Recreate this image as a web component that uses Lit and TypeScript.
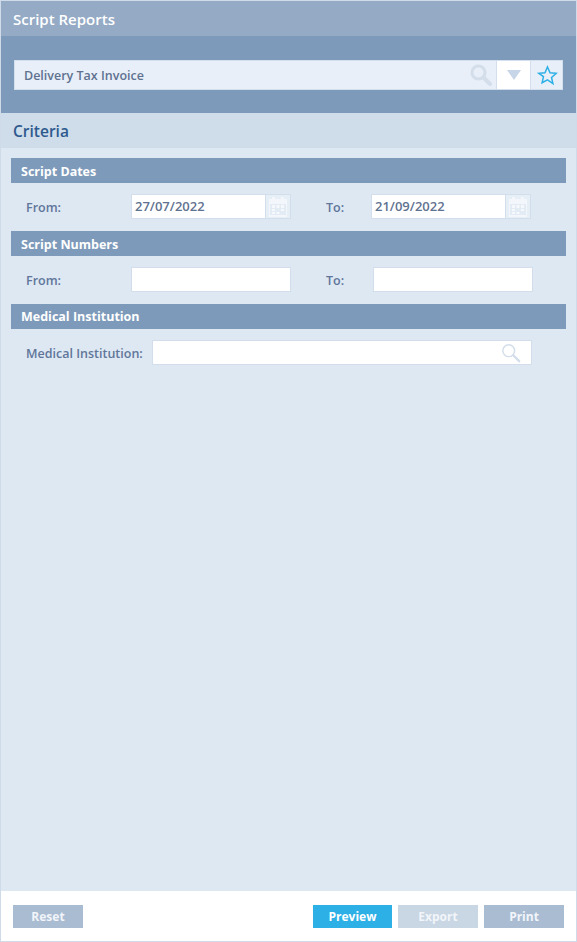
import { LitElement, html, css, svg } from "lit";
import { customElement } from "lit/decorators.js";

const calendar = html`<svg class="cal" viewBox="0 0 20 22" width="20" height="22" aria-hidden="true">
  <path fill="#f3f6fb" d="M1 3h3V1h3v2h6V1h3v2h3v18H1z"/>
  <path fill="#e3ebf4" d="M2 8h16v11H2z"/>
  <path fill="#f6f9fc" d="M4 9h3v3H4zM8.500 9h3v3h-3zM13 9h3v3h-3zM4 13h3v2H4zM13 13h3v2h-3zM4 16h3v2H4zM8.500 16h3v2h-3z"/>
</svg>`;

const searchIcon = (cls: string, stroke: string, w: number) => svg`<svg class=${cls} viewBox="0 0 22 22" aria-hidden="true">
  <circle cx="8.5" cy="8.5" r="6.5" fill="none" stroke=${stroke} stroke-width=${w}/>
  <path d="M13.5 13.5 20 20" fill="none" stroke=${stroke} stroke-width=${w + 1} stroke-linecap="round"/>
</svg>`;

@customElement("app-root")
export class AppRoot extends LitElement {
  static styles = css`
    :host {
      display: block;
      width: 577px;
      height: 942px;
      font-family: "Open Sans", "Noto Sans", sans-serif;
    }
    * { box-sizing: border-box; }
    .page {
      width: 577px;
      height: 942px;
      display: flex;
      flex-direction: column;
      border: 1px solid #cfdbe8;
      background: #dee8f3;
    }
    .title {
      height: 35px;
      flex: none;
      background: #94aac5;
      color: #fff;
      font-size: 15px;
      font-weight: 600;
      line-height: 37px;
      padding-left: 12px;
    }
    .picker {
      height: 77px;
      flex: none;
      background: #7d9aba;
      padding: 24px 13px 0 13px;
    }
    .combo {
      display: flex;
      height: 30px;
      background: #e8eff8;
      border: 1px solid #d3dfec;
    }
    .combo-text {
      flex: 1;
      display: flex;
      align-items: center;
      justify-content: space-between;
      padding: 0 4px 0 9px;
      font-size: 12.5px;
      font-weight: 600;
      color: #5f7290;
    }
    .lens-big { width: 22px; height: 22px; }
    .arrow {
      width: 35px;
      flex: none;
      background: #fff;
      border-left: 1px solid #d3dfec;
      border-right: 1px solid #d3dfec;
      display: flex;
      align-items: center;
      justify-content: center;
    }
    .tri {
      width: 0;
      height: 0;
      border-left: 7px solid transparent;
      border-right: 7px solid transparent;
      border-top: 10px solid #c6d5e7;
    }
    .fav {
      width: 31px;
      flex: none;
      display: flex;
      align-items: center;
      justify-content: center;
      padding-left: 2px;
    }
    .star { width: 21px; height: 21px; }
    .criteria {
      height: 35px;
      flex: none;
      background: #cfdcea;
      color: #2d5a8e;
      font-size: 15.5px;
      font-weight: 600;
      line-height: 37px;
      padding-left: 12px;
    }
    .body {
      flex: 1;
      padding: 10px 10px 0 10px;
      display: flex;
      flex-direction: column;
    }
    .head {
      height: 25px;
      background: #7d9aba;
      color: #fff;
      font-size: 12.5px;
      font-weight: 700;
      line-height: 27px;
      padding-left: 10px;
    }
    .head.tight { line-height: 25px; }
    .row {
      height: 48px;
      display: flex;
      align-items: flex-start;
      padding-top: 11px;
      font-size: 12.5px;
      font-weight: 600;
      color: #60769a;
    }
    .row.last { height: 47px; }
    .label {
      height: 25px;
      line-height: 27px;
    }
    .l-from { width: 120px; padding-left: 15px; flex: none; }
    .l-to { width: 45px; flex: none; }
    .l-to.n { width: 47px; }
    .gap { width: 35px; flex: none; }
    .l-med { width: 141px; padding-left: 15px; flex: none; white-space: nowrap; }
    .box {
      height: 25px;
      background: #fff;
      border: 1px solid #d2deec;
      line-height: 23px;
      padding-left: 3px;
      font-size: 13px;
      font-weight: 600;
      color: #5f7290;
      flex: none;
    }
    .date { width: 134px; border-right: none; }
    .calbtn {
      width: 26px;
      height: 25px;
      flex: none;
      background: #e6eef6;
      border: 1px solid #d2deec;
      display: flex;
      align-items: center;
      justify-content: center;
    }
    .num { width: 160px; }
    .med {
      width: 380px;
      display: flex;
      align-items: center;
      justify-content: flex-end;
      padding-right: 10px;
    }
    .lens-small { width: 20px; height: 20px; }
    .foot {
      height: 50px;
      flex: none;
      background: #fff;
      display: flex;
      align-items: flex-start;
      padding: 14px 12px 0 12px;
    }
    .btn {
      height: 23px;
      color: #f2f5f9;
      font-size: 12px;
      font-weight: 700;
      text-align: center;
      line-height: 23px;
      flex: none;
    }
    .reset { width: 70px; background: #a9bcd2; margin-right: auto; }
    .preview { width: 79px; background: #2cb0e6; margin-right: 6px; color: #fff; }
    .export { width: 80px; background: #c9d6e3; margin-right: 6px; }
    .print { width: 80px; background: #a9bcd2; }
  `;

  render() {
    return html`<div class="page">
      <div class="title">Script Reports</div>
      <div class="picker">
        <div class="combo">
          <div class="combo-text">
            <span>Delivery Tax Invoice</span>
            ${searchIcon("lens-big", "#d3deea", 3)}
          </div>
          <div class="arrow"><div class="tri"></div></div>
          <div class="fav">
            <svg class="star" viewBox="0 0 24 24" aria-hidden="true">
              <path d="M12 2.200l2.900 6.600 7.100.7-5.400 4.700 1.600 7.100L12 17l-6.200 3.300 1.600-7.100L2 9.500l7.100-.7z" fill="none" stroke="#2cb0e6" stroke-width="1.700" stroke-linejoin="miter"/>
            </svg>
          </div>
        </div>
      </div>
      <div class="criteria">Criteria</div>
      <div class="body">
        <div class="head">Script Dates</div>
        <div class="row">
          <span class="label l-from">From:</span>
          <div class="box date">27/07/2022</div>
          <div class="calbtn">${calendar}</div>
          <span class="gap"></span>
          <span class="label l-to">To:</span>
          <div class="box date">21/09/2022</div>
          <div class="calbtn">${calendar}</div>
        </div>
        <div class="head">Script Numbers</div>
        <div class="row">
          <span class="label l-from">From:</span>
          <div class="box num"></div>
          <span class="gap"></span>
          <span class="label l-to n">To:</span>
          <div class="box num"></div>
        </div>
        <div class="head tight">Medical Institution</div>
        <div class="row last">
          <span class="label l-med">Medical Institution:</span>
          <div class="box med">${searchIcon("lens-small", "#d3deea", 1.6)}</div>
        </div>
      </div>
      <div class="foot">
        <div class="btn reset">Reset</div>
        <div class="btn preview">Preview</div>
        <div class="btn export">Export</div>
        <div class="btn print">Print</div>
      </div>
    </div>`;
  }
}
